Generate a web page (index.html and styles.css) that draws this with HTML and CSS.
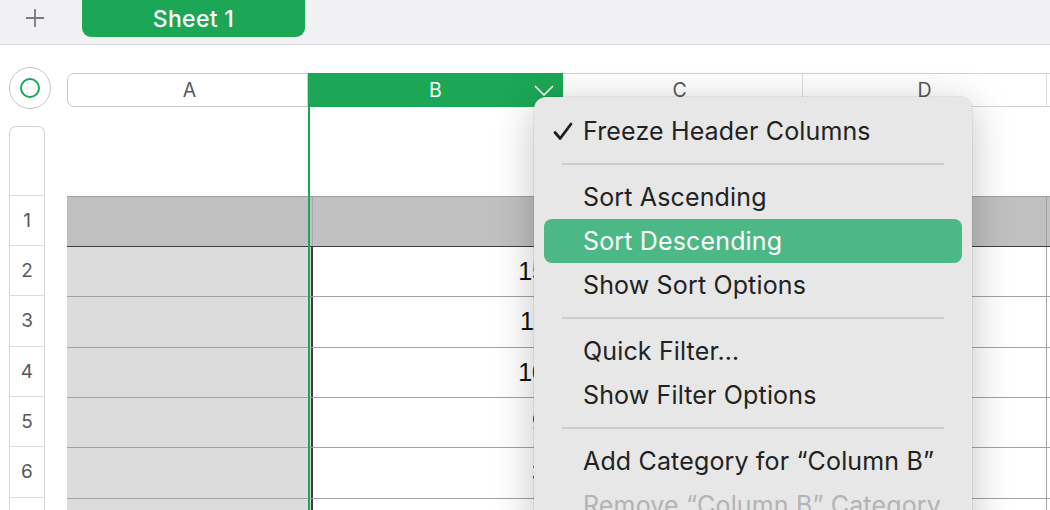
FILE: index.html
```html
<!DOCTYPE html>
<html>
<head>
<meta charset="utf-8">
<link rel="stylesheet" href="styles.css">
</head>
<body>
<div class="tabbar">
  <div class="add">
    <svg width="20" height="20" viewBox="0 0 20 20"><path d="M10 1v18M1 10h18" stroke="#7b7b7d" stroke-width="1.8" fill="none"/></svg>
  </div>
  <div class="tab">Sheet 1</div>
</div>
<div class="sheet">
  <div class="gutter">
    <div class="selectall"><span class="ring"></span></div>
    <div class="rowheads">
      <div class="rh blank"></div>
      <div class="rh first">1</div>
      <div class="rh">2</div>
      <div class="rh">3</div>
      <div class="rh">4</div>
      <div class="rh">5</div>
      <div class="rh">6</div>
      <div class="rh"></div>
    </div>
  </div>
  <div class="canvas">
    <div class="colheads">
      <div class="ch cha">A</div>
      <div class="ch chb">B
        <svg class="chev" width="20" height="11" viewBox="0 0 20 11"><path d="M1 1l9 9 9-9" stroke="#ffffff" stroke-width="1.6" fill="none"/></svg>
      </div>
      <div class="ch chc">C</div>
      <div class="ch chd">D</div>
      <div class="ch che"></div>
    </div>
    <div class="titlespace"></div>
    <div class="table">
      <div class="row head">
        <div class="cell ca"></div><div class="cell cb"></div><div class="cell cc"></div><div class="cell cd"></div><div class="cell ce"></div>
      </div>
      <div class="row">
        <div class="cell ca"></div><div class="cell cb num">15</div><div class="cell cc"></div><div class="cell cd"></div><div class="cell ce"></div>
      </div>
      <div class="row">
        <div class="cell ca"></div><div class="cell cb num">11</div><div class="cell cc"></div><div class="cell cd"></div><div class="cell ce"></div>
      </div>
      <div class="row">
        <div class="cell ca"></div><div class="cell cb num">10</div><div class="cell cc"></div><div class="cell cd"></div><div class="cell ce"></div>
      </div>
      <div class="row">
        <div class="cell ca"></div><div class="cell cb num">9</div><div class="cell cc"></div><div class="cell cd"></div><div class="cell ce"></div>
      </div>
      <div class="row">
        <div class="cell ca"></div><div class="cell cb num">3</div><div class="cell cc"></div><div class="cell cd"></div><div class="cell ce"></div>
      </div>
      <div class="row">
        <div class="cell ca"></div><div class="cell cb num"></div><div class="cell cc"></div><div class="cell cd"></div><div class="cell ce"></div>
      </div>
    </div>
    <div class="selline"></div>
    <div class="menu">
      <div class="item"><span class="check"><svg width="20" height="19" viewBox="0 0 20 19"><path d="M2 10.5l5.2 6L18 2" stroke="#1f1f1f" stroke-width="2.8" fill="none" stroke-linecap="round" stroke-linejoin="round"/></svg></span>Freeze Header Columns</div>
      <div class="sep"></div>
      <div class="item"><span class="check"></span>Sort Ascending</div>
      <div class="item active"><span class="check"></span>Sort Descending</div>
      <div class="item"><span class="check"></span>Show Sort Options</div>
      <div class="sep"></div>
      <div class="item"><span class="check"></span>Quick Filter…</div>
      <div class="item"><span class="check"></span>Show Filter Options</div>
      <div class="sep"></div>
      <div class="item"><span class="check"></span>Add Category for “Column B”</div>
      <div class="item disabled"><span class="check"></span>Remove “Column B” Category</div>
    </div>
  </div>
</div>
</body>
</html>
```

FILE: styles.css
```css
html, body {
  margin: 0;
  padding: 0;
  width: 1050px;
  height: 510px;
  overflow: hidden;
  background: #ffffff;
  font-family: "Inter", "Liberation Sans", sans-serif;
}

.tabbar {
  height: 44px;
  background: #f1f1f3;
  border-bottom: 1px solid #d8d8da;
  display: flex;
  align-items: flex-start;
}

.add {
  width: 82px;
  height: 36px;
  display: flex;
  align-items: center;
  padding-left: 25px;
  box-sizing: border-box;
}

.add svg {
  display: block;
}

.tab {
  width: 223px;
  height: 37px;
  background: #1ba755;
  border-radius: 0 0 9px 9px;
  color: #ffffff;
  font-size: 23px;
  font-weight: 500;
  display: flex;
  align-items: center;
  justify-content: center;
  letter-spacing: 0.3px;
}

.sheet {
  display: flex;
}

.gutter {
  width: 67px;
  flex: none;
  padding-left: 9px;
  box-sizing: border-box;
}

.selectall {
  margin-top: 22px;
  width: 42px;
  height: 42px;
  box-sizing: border-box;
  border: 1px solid #c6c6c6;
  border-radius: 50%;
  display: flex;
  align-items: center;
  justify-content: center;
  background: #fff;
}

.ring {
  width: 20px;
  height: 20px;
  box-sizing: border-box;
  border: 2.5px solid #1ba755;
  border-radius: 50%;
}

.rowheads {
  margin-top: 17px;
  width: 36px;
  box-sizing: border-box;
  border: 1px solid #d4d4d4;
  border-bottom: none;
  border-radius: 7px 7px 0 0;
}

.rh {
  height: 50.33px;
  box-sizing: border-box;
  border-bottom: 1px solid #dcdcdc;
  display: flex;
  align-items: center;
  justify-content: center;
  font-size: 19px;
  color: #58585a;
}

.rh.blank {
  height: 69px;
}

.rh.first {
  height: 50px;
}

.canvas {
  position: relative;
  flex: 1;
  min-width: 0;
}

.colheads {
  margin-top: 28px;
  height: 34px;
  display: flex;
}

.ch {
  box-sizing: border-box;
  height: 34px;
  border-top: 1px solid #d2d2d2;
  border-bottom: 1px solid #d2d2d2;
  border-right: 1px solid #dddddd;
  display: flex;
  align-items: center;
  justify-content: center;
  font-size: 19.5px;
  color: #58585a;
  flex: none;
}

.cha {
  width: 241px;
  border: 1px solid #c8c8c8;
  border-radius: 7px 0 0 7px;
  padding-left: 4px;
}

.chb {
  width: 255px;
  background: #1ba755;
  border: none;
  color: #ffffff;
  position: relative;
}

.chev {
  position: absolute;
  left: 226px;
  top: 12px;
}

.chc {
  width: 240px;
  padding-right: 6px;
}

.chd {
  width: 244px;
}

.che {
  flex: 1;
  border-right: none;
}

.titlespace {
  height: 89px;
}

.table {
  display: flex;
  flex-direction: column;
}

.row {
  display: flex;
  height: 50.33px;
  box-sizing: border-box;
  border-bottom: 1px solid #a2a2a2;
}

.row.head {
  height: 51px;
  border-top: 1px solid #a0a0a0;
  border-bottom: 1px solid #3f3f3f;
  background: #bfc0bf;
}

.cell {
  box-sizing: border-box;
  flex: none;
  border-right: 1px solid #a2a2a2;
  height: 100%;
}

.ca {
  width: 246px;
  background: #dcdcdc;
  border-right: 2px solid #3c3c3c;
}

.row.head .ca {
  background: #bfc0bf;
  border-right: 1px solid #a8a8a8;
}

.cb {
  width: 250px;
}

.cc {
  width: 240px;
}

.cd {
  width: 244px;
}

.ce {
  flex: 1;
  border-right: none;
}

.num {
  font-size: 25px;
  color: #111111;
  display: flex;
  align-items: center;
  justify-content: flex-end;
  padding-right: 16px;
  font-family: "Liberation Sans", "Inter", sans-serif;
}

.selline {
  position: absolute;
  left: 241px;
  top: 62px;
  bottom: 0;
  width: 2px;
  background: #1ba755;
}

.menu {
  position: absolute;
  left: 467px;
  top: 52px;
  width: 438px;
  box-sizing: border-box;
  padding: 12px 10px;
  background: #e6e7e6;
  border-radius: 12px;
  box-shadow: 0 8px 40px rgba(0, 0, 0, 0.24), 0 0 0 1px rgba(0, 0, 0, 0.06);
}

.item {
  height: 44px;
  display: flex;
  align-items: center;
  padding-left: 9px;
  border-radius: 8px;
  font-size: 25px;
  color: #222222;
  letter-spacing: 0.15px;
  white-space: nowrap;
}

.check {
  width: 30px;
  flex: none;
  display: flex;
  align-items: center;
}

.check svg {
  display: block;
}

.item.active {
  background: #4cb885;
  color: #ffffff;
}

.item.disabled {
  color: #b3b3b3;
}

.sep {
  height: 2px;
  margin: 10px 18px;
  background: #cbcccb;
}
```
